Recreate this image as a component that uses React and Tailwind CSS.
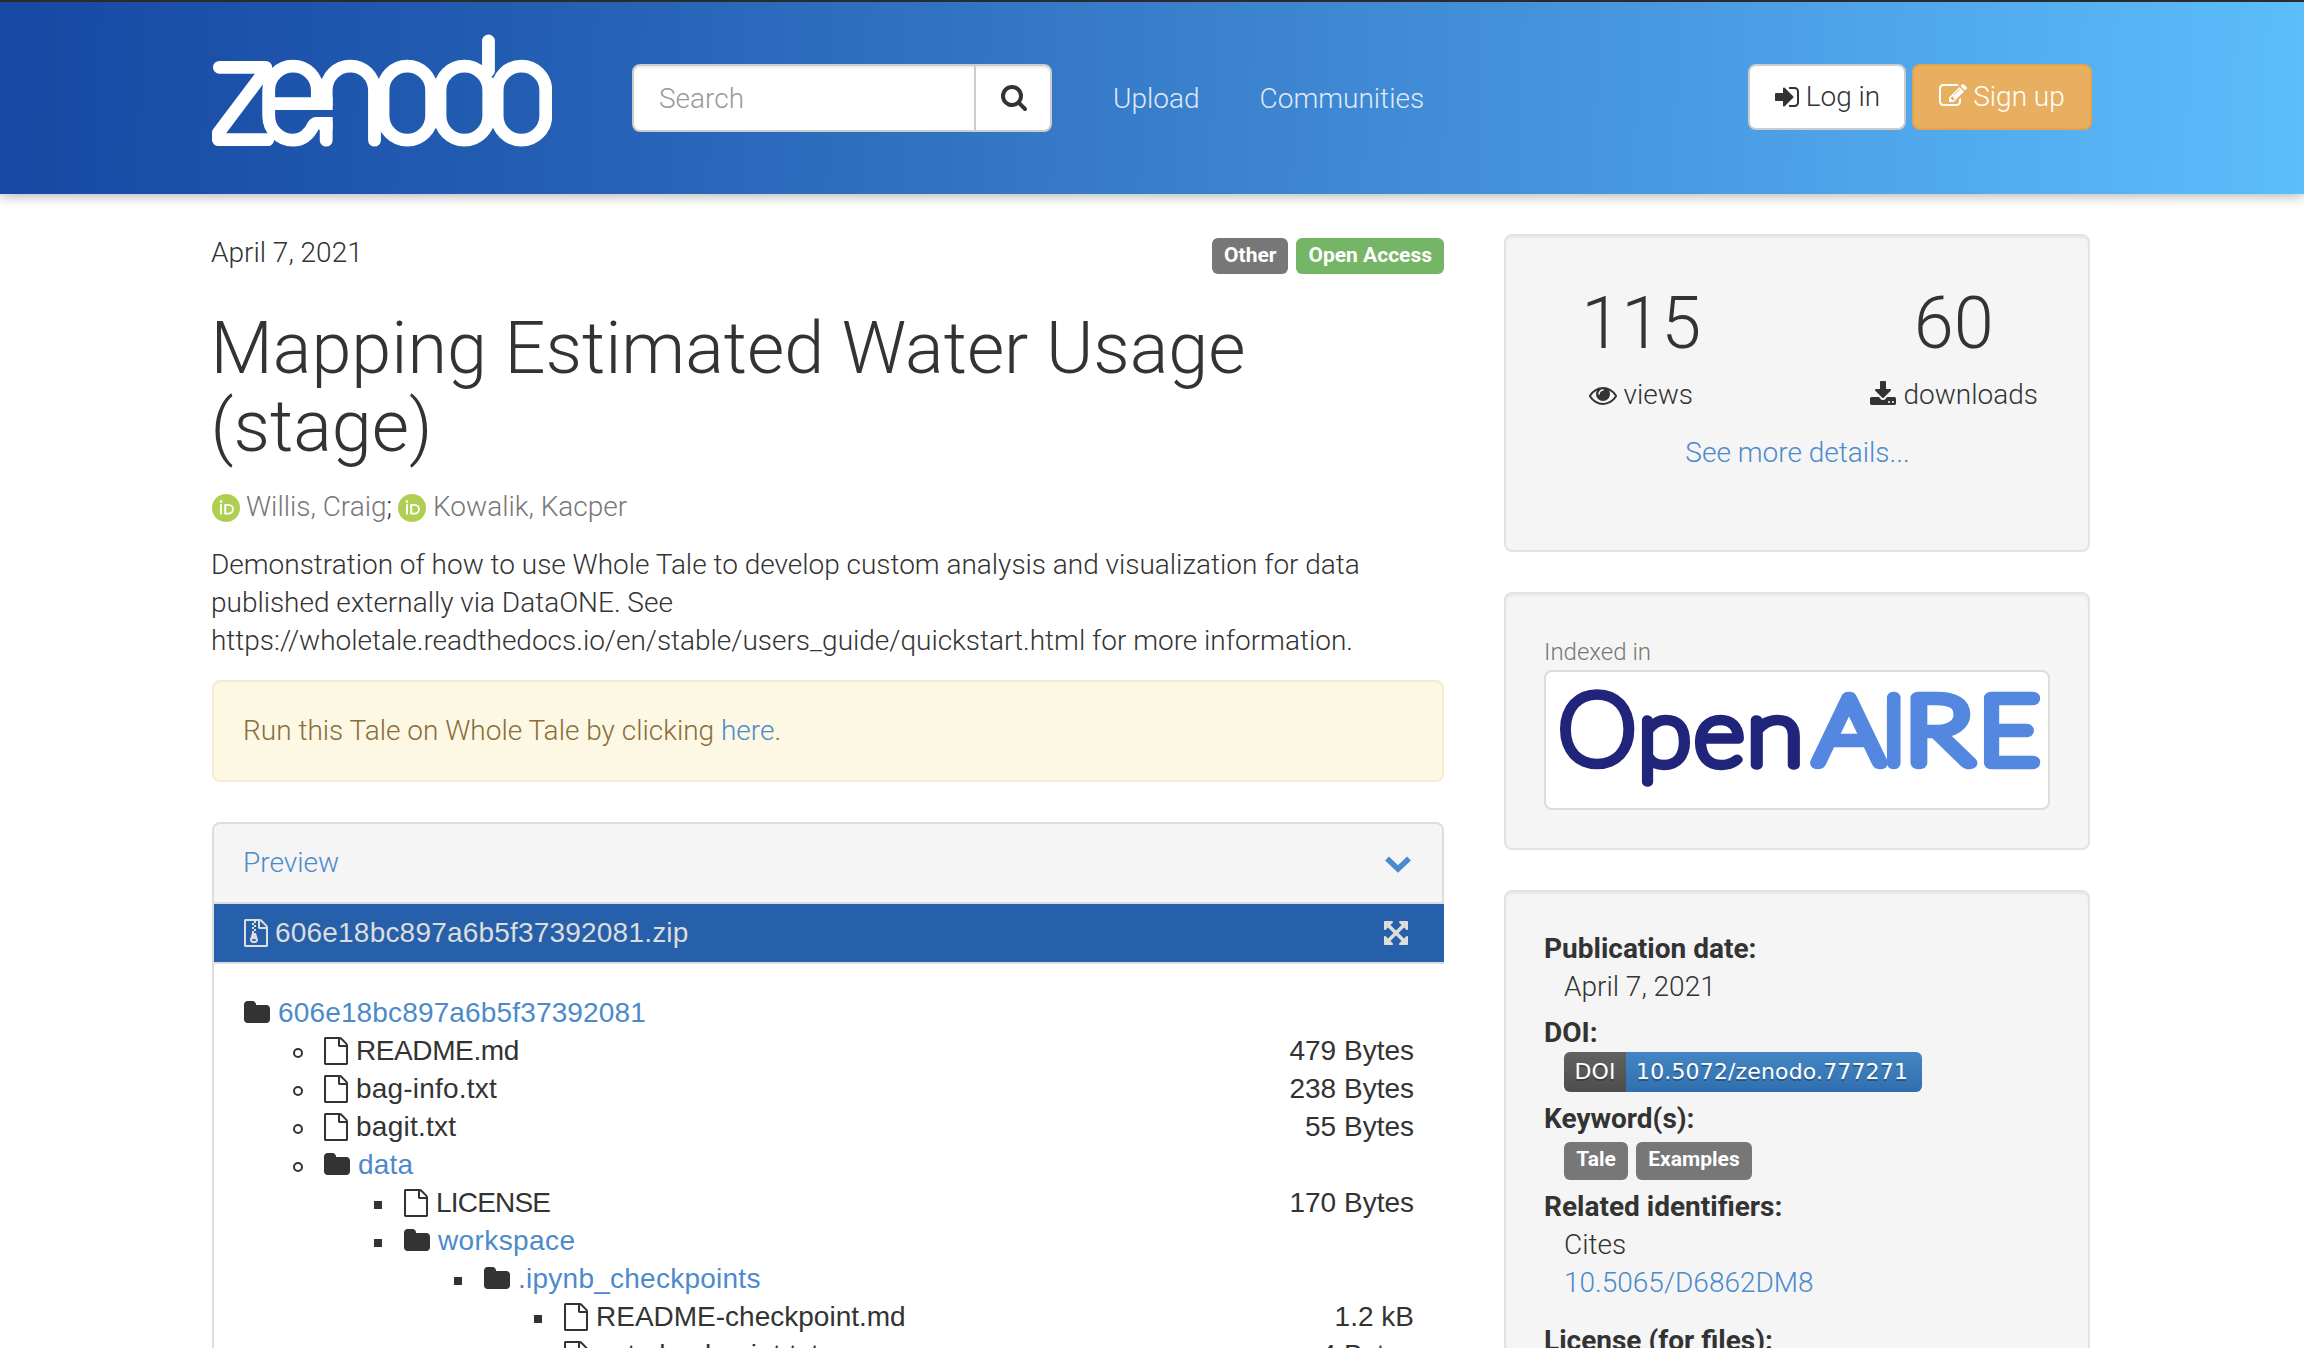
import React from "react";

const ICONS = {
  search:
    "M1216 832q0-185-131.5-316.5t-316.5-131.5-316.5 131.5-131.5 316.5 131.5 316.5 316.5 131.5 316.5-131.5 131.5-316.5zm512 832q0 52-38 90t-90 38q-54 0-90-38l-343-342q-179 124-399 124-143 0-273.5-55.5t-225-150-150-225-55.5-273.5 55.5-273.5 150-225 225-150 273.5-55.5 273.5 55.5 225 150 150 225 55.5 273.5q0 220-124 399l343 343q37 37 37 90z",
  signIn:
    "M1312 896q0 26-19 45l-544 544q-19 19-45 19t-45-19-19-45v-288h-448q-26 0-45-19t-19-45v-384q0-26 19-45t45-19h448v-288q0-26 19-45t45-19 45 19l544 544q19 19 19 45zm352-352v704q0 119-84.5 203.5t-203.5 84.5h-320q-13 0-22.5-9.5t-9.5-22.5q0-4-1-20t-.5-26.5 3-23.5 10-19.5 20.5-6.5h320q66 0 113-47t47-113v-704q0-66-47-113t-113-47h-312l-11.5-1-11.5-3-8-5.5-7-9-2-13.5q0-4-1-20t-.5-26.5 3-23.5 10-19.5 20.5-6.5h320q119 0 203.5 84.5t84.5 203.5z",
  edit:
    "M888 1184l116-116-152-152-116 116v56h96v96h56zm440-720q-16-16-33 1l-350 350q-17 17-1 33t33-1l350-350q17-17 1-33zm80 594v190q0 119-84.5 203.5t-203.5 84.5h-832q-119 0-203.5-84.5t-84.5-203.5v-832q0-119 84.5-203.5t203.5-84.5h832q63 0 117 25 15 7 18 23 3 17-9 29l-49 49q-14 14-32 8-23-6-45-6h-832q-66 0-113 47t-47 113v832q0 66 47 113t113 47h832q66 0 113-47t47-113v-126q0-13 9-22l64-64q15-15 35-7t20 29zm-96-738l288 288-672 672h-288v-288zm444 132l-92 92-288-288 92-92q28-28 68-28t68 28l152 152q28 28 28 68t-28 68z",
  eye:
    "M1664 960q-152-236-381-353 61 104 61 225 0 185-131.5 316.5t-316.5 131.5-316.5-131.5-131.5-316.5q0-121 61-225-229 117-381 353 133 205 333.5 326.5t434.5 121.5 434.5-121.5 333.5-326.5zm-720-384q0-20-14-34t-34-14q-125 0-214.5 89.5t-89.5 214.5q0 20 14 34t34 14 34-14 14-34q0-86 61-147t147-61q20 0 34-14t14-34zm848 384q0 34-20 69-140 230-376.5 368.5t-499.5 138.5-499.5-139-376.5-368q-20-35-20-69t20-69q140-229 376.5-368t499.5-139 499.5 139 376.5 368q20 35 20 69z",
  download:
    "M1344 1344q0-26-19-45t-45-19-45 19-19 45 19 45 45 19 45-19 19-45zm256 0q0-26-19-45t-45-19-45 19-19 45 19 45 45 19 45-19 19-45zm128-224v320q0 40-28 68t-68 28h-1472q-40 0-68-28t-28-68v-320q0-40 28-68t68-28h465l135 136q58 56 136 56t136-56l136-136h464q40 0 68 28t28 68zm-325-569q17 41-14 70l-448 448q-18 19-45 19t-45-19l-448-448q-31-29-14-70 17-39 59-39h256v-448q0-26 19-45t45-19h256q26 0 45 19t19 45v448h256q42 0 59 39z",
  folder:
    "M1728 608v704q0 92-66 158t-158 66h-1216q-92 0-158-66t-66-158v-960q0-92 66-158t158-66h320q92 0 158 66t66 158v32h672q92 0 158 66t66 158z",
  file:
    "M1596 380q28 28 48 76t20 88v1152q0 40-28 68t-68 28h-1344q-40 0-68-28t-28-68v-1600q0-40 28-68t68-28h896q40 0 88 20t76 48zm-444-244v376h376q-10-29-22-41l-313-313q-12-12-41-22zm384 1528v-1024h-416q-40 0-68-28t-28-68v-416h-768v1536h1280z",
  archive:
    "M768 384v-128h-128v128h128zm128 128v-128h-128v128h128zm-128 128v-128h-128v128h128zm128 128v-128h-128v128h128zm700-388q28 28 48 76t20 88v1152q0 40-28 68t-68 28h-1344q-40 0-68-28t-28-68v-1600q0-40 28-68t68-28h896q40 0 88 20t76 48zm-444-244v376h376q-10-29-22-41l-313-313q-12-12-41-22zm384 1528v-1024h-416q-40 0-68-28t-28-68v-416h-128v128h-128v-128h-512v1536h1280zm-627-721l107 349q8 27 8 52 0 83-72.5 137.5t-183.5 54.5-183.5-54.5-72.5-137.5q0-25 8-52 21-63 120-396v-128h128v128h79q22 0 39 13t23 34zm-141 465q53 0 90.5-19t37.5-45-37.5-45-90.5-19-90.5 19-37.5 45 37.5 45 90.5 19z",
  expand:
    "M1411 541l-355 355 355 355 144-144q29-31 70-14 39 17 39 59v448q0 26-19 45t-45 19h-448q-42 0-59-40-17-39 14-69l144-144-355-355-355 355 144 144q31 30 14 69-17 40-59 40h-448q-26 0-45-19t-19-45v-448q0-42 40-59 39-17 69 14l144 144 355-355-355-355-144 144q-19 19-45 19-12 0-24-5-40-17-40-59v-448q0-26 19-45t45-19h448q42 0 59 40 17 39-14 69l-144 144 355 355 355-355-144-144q-31-30-14-69 17-40 59-40h448q26 0 45 19t19 45v448q0 42-39 59-13 5-25 5-26 0-45-19z",
};

function Icon({ name, className = "" }) {
  return (
    <svg viewBox="0 0 1792 1792" fill="currentColor" className={`size-7 shrink-0 ${className}`} aria-hidden="true">
      <path d={ICONS[name]} />
    </svg>
  );
}

function ZenodoLogo() {
  return (
    <svg viewBox="66 100 1020 340" className="h-[113.3px] w-[340px] shrink-0" fill="none" stroke="#fff" strokeWidth="38.5" strokeLinecap="round" strokeLinejoin="round" role="img" aria-label="zenodo">
      <path d="M88 200H227V208L85 397V417H233" />
      <path strokeLinecap="butt" d="M428 309H236M382 309V270C382 229 350 196.500 309 196.500S236 229 236 270V345C236 386 268 418.500 309 418.500C342 418.500 360 396 371 373Q374 368 380 368H428" />
      <path d="M408.500 368V418.500" />
      <path d="M408.500 309V270C408.500 229 440 196.500 481 196.500S553.500 229 553.500 270V418.500" />
      <rect x="579" y="196.500" width="146" height="222" rx="73" />
      <rect x="750" y="196.500" width="146.500" height="222" rx="73" />
      <path d="M895.500 121V210" />
      <rect x="921.500" y="196.500" width="146" height="222" rx="73" />
    </svg>
  );
}

function OpenAireLogo() {
  return (
    <svg viewBox="1546 672 502 136" className="h-[136px] w-[502px]" role="img" aria-label="OpenAIRE" fontFamily="Lato, sans-serif" fontWeight="100" strokeLinejoin="round" strokeLinecap="round">
      <g fill="#20247b" stroke="#20247b" strokeWidth="9.500">
        <text transform="translate(1558 764) scale(1.020 1)" fontSize="98">O</text>
        <text transform="translate(1638 765) scale(1.060 1)" fontSize="92">p</text>
        <text transform="translate(1694 765) scale(1.060 1)" fontSize="92">e</text>
        <text transform="translate(1746.500 765) scale(1.140 1)" fontSize="92">n</text>
      </g>
      <g fill="#5488e0" stroke="#5488e0" strokeWidth="12.500">
        <text transform="translate(1815 763) scale(1.160 1)" fontSize="92">A</text>
        <text transform="translate(1882.500 763)" fontSize="92">I</text>
        <text transform="translate(1905 763) scale(1.240 1)" fontSize="92">R</text>
        <text transform="translate(1979 763) scale(1.120 1)" fontSize="92">E</text>
      </g>
    </svg>
  );
}

function Orcid() {
  return (
    <svg viewBox="0 0 28 28" className="mt-px size-7 shrink-0" aria-hidden="true">
      <circle cx="14" cy="14" r="14" fill="#b0cf52" />
      <circle cx="9" cy="7.600" r="1.300" fill="#fff" />
      <path d="M9 10.300V20.500M13.200 10.900V19.600H16.200C19.200 19.600 21 17.600 21 15.250S19.200 10.900 16.200 10.900Z" fill="none" stroke="#fff" strokeWidth="1.900" />
    </svg>
  );
}

const INDENT = ["pl-0", "pl-20", "pl-40", "pl-60", "pl-80"];

const TREE = [
  { level: 0, name: "606e18bc897a6b5f37392081", folder: true, spacing: "tracking-[0.15px]" },
  { level: 1, name: "README.md", size: "479 Bytes", spacing: "tracking-[-0.4px]" },
  { level: 1, name: "bag-info.txt", size: "238 Bytes", spacing: "tracking-[0.2px]" },
  { level: 1, name: "bagit.txt", size: "55 Bytes", spacing: "tracking-[0.25px]" },
  { level: 1, name: "data", folder: true, spacing: "tracking-[0.2px]" },
  { level: 2, name: "LICENSE", size: "170 Bytes", spacing: "tracking-[-0.8px]" },
  { level: 2, name: "workspace", folder: true, spacing: "tracking-[0.4px]" },
  { level: 3, name: ".ipynb_checkpoints", folder: true, spacing: "tracking-[0.25px]" },
  { level: 4, name: "README-checkpoint.md", size: "1.2 kB" },
  { level: 4, name: "apt-checkpoint.txt", size: "4 Bytes", spacing: "tracking-[0.2px]" },
];

function Bullet({ level }) {
  if (level === 0) return null;
  return (
    <span className="-ml-[31px] flex w-[31px] shrink-0 items-center">
      {level === 1 ? (
        <span className="mt-[3px] size-2.5 rounded-full border-2 border-[#333]" />
      ) : (
        <span className="mt-[3px] ml-px size-2 bg-[#333]" />
      )}
    </span>
  );
}

function TreeRow({ level, name, folder, size, spacing = "" }) {
  return (
    <li className={`flex h-[38px] items-center whitespace-nowrap ${INDENT[level]}`}>
      <Bullet level={level} />
      <Icon name={folder ? "folder" : "file"} className={folder ? "-ml-px mr-[7px]" : "-ml-0.5 mr-1.5"} />
      <span className={`${spacing} ${folder ? "text-[#4c8acb]" : ""}`}>{name}</span>
      {size && <span className="ml-auto">{size}</span>}
    </li>
  );
}

function Card({ className, children }) {
  return (
    <section className={`rounded-lg border-2 border-[#e3e3e3] bg-[#f5f5f5] px-[38px] shadow-[inset_0_2px_2px_rgba(0,0,0,0.05)] ${className}`}>
      {children}
    </section>
  );
}

function Stat({ value, icon, label, iconClass }) {
  return (
    <div className="flex w-[313px] flex-col items-center">
      <div className="text-[72px] leading-[79px]">{value}</div>
      <div className="mt-[13px] flex items-center">
        <Icon name={icon} className={iconClass} />
        <span>{label}</span>
      </div>
    </div>
  );
}

export default function App() {
  return (
    <div className="h-[1348px] w-[2304px] overflow-hidden bg-white font-[Roboto,sans-serif] text-[28px] leading-[38px] font-light text-[#333]">
      <header className="relative flex h-[194px] items-start border-t-2 border-[#2b2b2b] bg-[linear-gradient(92deg,#1748a3_0%,#2460b4_25%,#3a80cd_52%,#4a9be4_74%,#5cbefb_100%)] pl-[212px] shadow-[0_2px_12px_rgba(0,0,0,0.3)]">
        <div className="mt-8">
          <ZenodoLogo />
        </div>
        <div className="mt-[62px] ml-20 flex h-[68px] w-[420px] rounded-lg border-2 border-[#ccc] bg-white shadow-[inset_0_2px_2px_rgba(0,0,0,0.075)]">
          <div className="flex-1 pt-3.5 pl-[25px] text-[#999]">Search</div>
          <div className="flex w-[76px] justify-center border-l-2 border-[#ccc] pt-[17px] pl-px">
            <Icon name="search" />
          </div>
        </div>
        <nav className="mt-[78px] ml-[61px] flex gap-[60px] text-[#dfe9f7]">
          <a>Upload</a>
          <a>Communities</a>
        </nav>
        <div className="mt-[62px] mr-[212px] ml-auto flex gap-1.5">
          <button className="flex h-[66px] w-[158px] items-start justify-center rounded-lg border-2 border-[#ccc] bg-white pt-3">
            <Icon name="signIn" className="mt-[5px] mr-[5px] -ml-px" />
            Log in
          </button>
          <button className="flex h-[66px] w-[180px] items-start justify-center rounded-lg border-2 border-[#e5a34b] bg-[#e8af60] pt-3 text-white">
            <Icon name="edit" className="mt-1 mr-1.5" />
            Sign up
          </button>
        </div>
      </header>

      <div className="flex gap-[60px] pl-[212px]">
        <main className="w-[1232px] pt-10">
          <div className="flex justify-between">
            <span className="-ml-px">April 7, 2021</span>
            <span className="mt-1 flex gap-2 text-[21px] leading-[34px] font-bold text-white">
              <span className="h-9 rounded-md bg-[#777] px-3">Other</span>
              <span className="h-9 rounded-md bg-[#74b566] px-3">Open Access</span>
            </span>
          </div>
          <h1 className="mt-9 -ml-[1.500px] text-[72px] leading-[78px]">
            Mapping Estimated Water Usage
            <br />
            (stage)
          </h1>
          <div className="mt-[22px] flex items-center">
            <Orcid />
            <span className="ml-1.5 text-[#777]">Willis, Craig</span>
            <span className="mr-1.5">;</span>
            <Orcid />
            <span className="ml-[7px] text-[#777]">Kowalik, Kacper</span>
          </div>
          <p className="mt-5 -ml-px tracking-[-0.015px]">
            Demonstration of how to use Whole Tale to develop custom analysis and visualization for data
            <br />
            published externally via DataONE. See
            <br />
            https://wholetale.readthedocs.io/en/stable/users_guide/quickstart.html for more information.
          </p>
          <div className="mt-5 rounded-lg border-2 border-[#f7ebcf] bg-[#fcf8e4] p-[30px] pl-[29px] text-[#8a6d3b]">
            Run this Tale on Whole Tale by clicking <a className="text-[#4c8acb]">here</a>.
          </div>

          <section className="mt-10">
            <div className="flex items-center justify-between rounded-t-lg border-2 border-[#ddd] bg-[#f5f5f5] py-5 pr-[31px] pl-[29px] text-[#4c8acb]">
              <span>Preview</span>
              <svg viewBox="0 0 26 17" className="mt-0.5 h-[17px] w-[26px]" fill="none" stroke="currentColor" strokeWidth="5.500" aria-hidden="true">
                <path d="M2 2.500L13 13L24 2.500" />
              </svg>
            </div>
            <div className="border-l-2 border-[#ddd] font-['Liberation_Sans',Arial,sans-serif]">
              <div className="flex h-[60px] items-center border-b-2 border-[#ddd] bg-[#2660aa] pr-[34px] pl-[28px] text-[#ddd]">
                <Icon name="archive" className="mr-[5px]" />
                <span className="tracking-[0.2px]">606e18bc897a6b5f37392081.zip</span>
                <Icon name="expand" className="ml-auto" />
              </div>
              <ul className="pt-[30px] pr-[30px] pl-[30px]">
                {TREE.map((row) => (
                  <TreeRow key={row.name} {...row} />
                ))}
              </ul>
            </div>
          </section>
        </main>

        <aside className="w-[586px] pt-10">
          <Card className="h-[318px]">
            <div className="-mx-[60px] flex justify-center pt-12 pl-px">
              <Stat value="115" icon="eye" label="views" iconClass="mr-1.5" />
              <Stat value="60" icon="download" label="downloads" iconClass="mr-1.5" />
            </div>
            <div className="mt-5 pl-px text-center text-[#4c8acb]">See more details...</div>
          </Card>

          <Card className="mt-10 h-[258px]">
            <div className="h-[76px] pt-[39px] text-2xl leading-[38px] text-[#777]">Indexed in</div>
            <div className="h-[140px] rounded-lg border-2 border-[#ddd] bg-white">
              <OpenAireLogo />
            </div>
          </Card>

          <Card className="mt-10 h-[600px] pt-[38px]">
            <dl>
              <dt className="font-bold">Publication date:</dt>
              <dd className="pl-5">April 7, 2021</dd>
              <dt className="mt-2 font-bold">DOI:</dt>
              <dd className="ml-5 flex h-10 w-[358px] overflow-hidden rounded-md font-['DejaVu_Sans',sans-serif] text-[22px] leading-10 font-normal tracking-[0.15px] whitespace-nowrap text-white [text-shadow:0_2px_0_rgba(1,1,1,0.3)]">
                <span className="w-[62px] bg-linear-to-b from-[#626262] to-[#4d4d4d] text-center">DOI</span>
                <span className="flex-1 bg-linear-to-b from-[#4486c3] to-[#2f6fae] pl-2.5">10.5072/zenodo.777271</span>
              </dd>
              <dt className="mt-2 font-bold">Keyword(s):</dt>
              <dd className="mt-1 ml-5 flex gap-2 text-[21px] leading-[34px] font-bold text-white">
                <span className="h-[38px] w-16 rounded-md bg-[#777] text-center">Tale</span>
                <span className="h-[38px] w-[116px] rounded-md bg-[#777] text-center">Examples</span>
              </dd>
              <dt className="mt-2 font-bold">Related identifiers:</dt>
              <dd className="pl-5">Cites</dd>
              <dd className="pl-5 text-[#4c8acb]">10.5065/D6862DM8</dd>
              <dt className="mt-5 font-bold">License (for files):</dt>
            </dl>
          </Card>
        </aside>
      </div>
    </div>
  );
}
